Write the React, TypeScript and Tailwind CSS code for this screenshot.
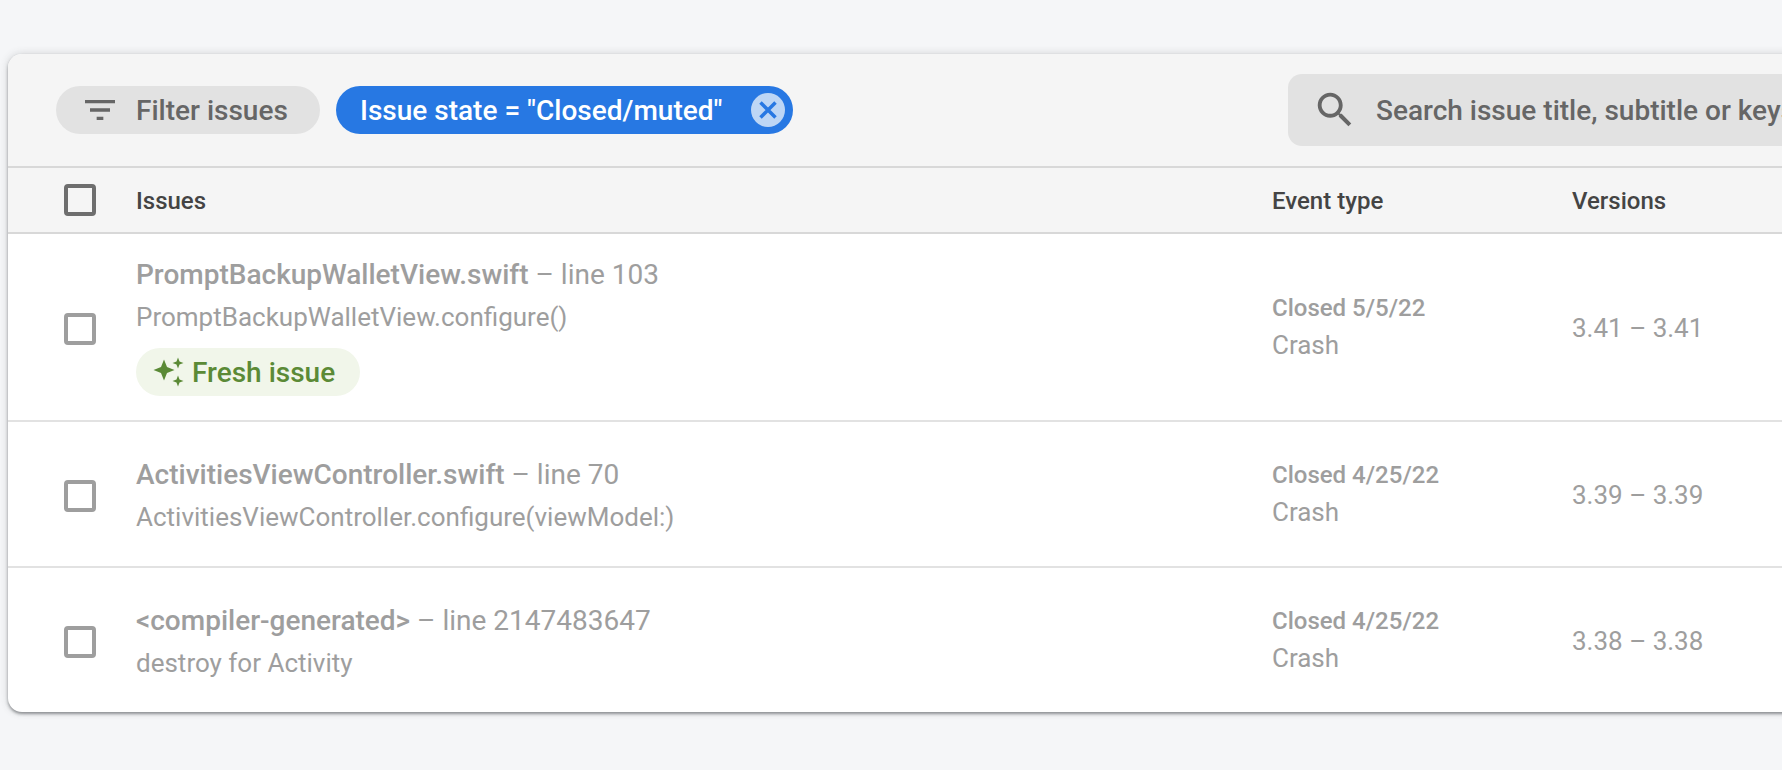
import React from "react";

type Issue = {
  file: string,
  line: string,
  subtitle: string,
  closed: string,
  versions: string,
  fresh?: boolean,
  rowClass: string
}

const issues: Issue[] = [
  {file: "PromptBackupWalletView.swift", line: "line 103", subtitle: "PromptBackupWalletView.configure()", closed: "Closed 5/5/22", versions: "3.41 – 3.41", fresh: true, rowClass: "h-[188px]"},
  {file: "ActivitiesViewController.swift", line: "line 70", subtitle: "ActivitiesViewController.configure(viewModel:)", closed: "Closed 4/25/22", versions: "3.39 – 3.39", rowClass: "h-[146px]"},
  {file: "<compiler-generated>", line: "line 2147483647", subtitle: "destroy for Activity", closed: "Closed 4/25/22", versions: "3.38 – 3.38", rowClass: "h-[144px]"},
];

function Checkbox({ className }: { className: string }) {
  return <div className={`w-8 h-8 rounded-[4px] border-[4px] ${className}`} />;
}

function FreshIcon() {
  return (
    <svg viewBox="0 0 32 32" className="w-8 h-8 fill-[#5b8a36]">
      <path d="M12 3.5 L15 11 L22.5 14 L15 17 L12 24.5 L9 17 L1.5 14 L9 11 Z" />
      <path d="M26 1.5 L27.5 5.5 L31.5 7 L27.5 8.5 L26 12.5 L24.5 8.5 L20.5 7 L24.5 5.5 Z" />
      <path d="M26 19.5 L27.5 23.5 L31.5 25 L27.5 26.5 L26 30.5 L24.5 26.5 L20.5 25 L24.5 23.5 Z" />
    </svg>
  );
}

function IssueRow({ issue }: { issue: Issue }) {
  return (
    <div className={`flex items-center border-b-[2px] border-[#e2e2e2] last:border-b-0 ${issue.rowClass}`}>
      <div className="w-[128px] pl-[56px] pt-[4px] shrink-0">
        <Checkbox className="border-[#9e9e9e]" />
      </div>
      <div className={issue.fresh ? "w-[1136px] shrink-0" : "w-[1136px] shrink-0 pt-[4px]"}>
        <div className="text-[28px] leading-[40px] text-[#9e9e9e]">
          <span className="font-medium">{issue.file}</span> – {issue.line}
        </div>
        <div className="mt-[2px] text-[26px] leading-[40px] text-[#9e9e9e]">{issue.subtitle}</div>
        {issue.fresh && (
          <div className="mt-[11px] mb-[3px] w-[224px] h-12 rounded-full bg-[#f1f6ea] flex items-center gap-[8px] pl-[16px] text-[28px] font-medium text-[#5b8a36]">
            <FreshIcon />
            <span className="pt-[2px]">Fresh issue</span>
          </div>
        )}
      </div>
      <div className="w-[300px] shrink-0 text-[#9e9e9e]">
        <div className="text-[24px] leading-[36px] font-medium">{issue.closed}</div>
        <div className="text-[26px] leading-[38px]">Crash</div>
      </div>
      <div className="shrink-0 pt-[2px] text-[26px] text-[#9e9e9e]">{issue.versions}</div>
    </div>
  );
}

export default function App() {
  return (
    <div className="w-full h-[770px] overflow-hidden bg-[#f5f6f8] pt-[54px] pl-[8px] font-['Roboto',sans-serif]">
      <div className="w-[2000px] h-[658px] rounded-[14px] bg-white shadow-[0_2px_3px_rgba(60,64,67,0.5),0_0_8px_rgba(60,64,67,0.2)] overflow-hidden">

        {/* Toolbar */}
        <div className="h-[114px] bg-[#f5f5f5] border-b-[2px] border-[#d8d8d8] flex items-center pl-[48px]">
          <div className="shrink-0 w-[264px] h-12 rounded-full bg-[#e2e2e2] flex items-center pl-[24px] gap-[16px] text-[28px] font-medium text-[#666666]">
            <svg viewBox="0 0 24 24" className="w-10 h-10 fill-[#666666]">
              <path d="M10 18h4v-2h-4v2zM3 6v2h18V6H3zm3 7h12v-2H6v2z" />
            </svg>
            <span className="pt-[2px]">Filter issues</span>
          </div>
          <div className="shrink-0 ml-4 w-[457px] h-12 rounded-full bg-[#2778e3] flex items-center justify-between pl-6 pr-[8px] text-[28px] font-medium text-white">
            <span className="pt-[2px]">Issue state = "Closed/muted"</span>
            <div className="w-[34px] h-[34px] rounded-full bg-[#bdd6f5] flex items-center justify-center">
              <svg viewBox="0 0 24 24" className="w-6 h-6 fill-none stroke-[#2778e3] stroke-[3.5]">
                <path d="M4.5 4.5 L19.5 19.5 M19.5 4.5 L4.5 19.5" />
              </svg>
            </div>
          </div>
          <div className="shrink-0 ml-[495px] w-[900px] h-[72px] rounded-[14px] bg-[#e2e2e2] flex items-center pl-[24px] gap-[18px] text-[28px] font-medium text-[#666666]">
            <svg viewBox="0 0 24 24" className="w-[46px] h-[46px] fill-[#666666]">
              <path d="M15.5 14h-.79l-.28-.27C15.41 12.59 16 11.11 16 9.5 16 5.91 13.09 3 9.5 3S3 5.91 3 9.5 5.91 16 9.5 16c1.61 0 3.09-.59 4.23-1.57l.27.28v.79l5 4.99L20.49 19l-4.99-5zm-6 0C7.01 14 5 11.99 5 9.5S7.01 5 9.5 5 14 7.01 14 9.5 11.99 14 9.5 14z" />
            </svg>
            <span className="pt-[2px]">Search issue title, subtitle or keys</span>
          </div>
        </div>

        {/* Table header */}
        <div className="h-[66px] bg-[#f5f5f5] border-b-[2px] border-[#d8d8d8] flex items-center text-[24px] font-medium text-[#444444]">
          <div className="w-[128px] pl-[56px] shrink-0">
            <Checkbox className="border-[#6e6e6e]" />
          </div>
          <div className="w-[1136px] shrink-0 pt-[1px]">Issues</div>
          <div className="w-[300px] shrink-0 pt-[1px]">Event type</div>
          <div className="shrink-0 pt-[1px]">Versions</div>
        </div>

        {issues.map((issue) => (
          <IssueRow key={issue.file} issue={issue} />
        ))}
      </div>
    </div>
  );
}
